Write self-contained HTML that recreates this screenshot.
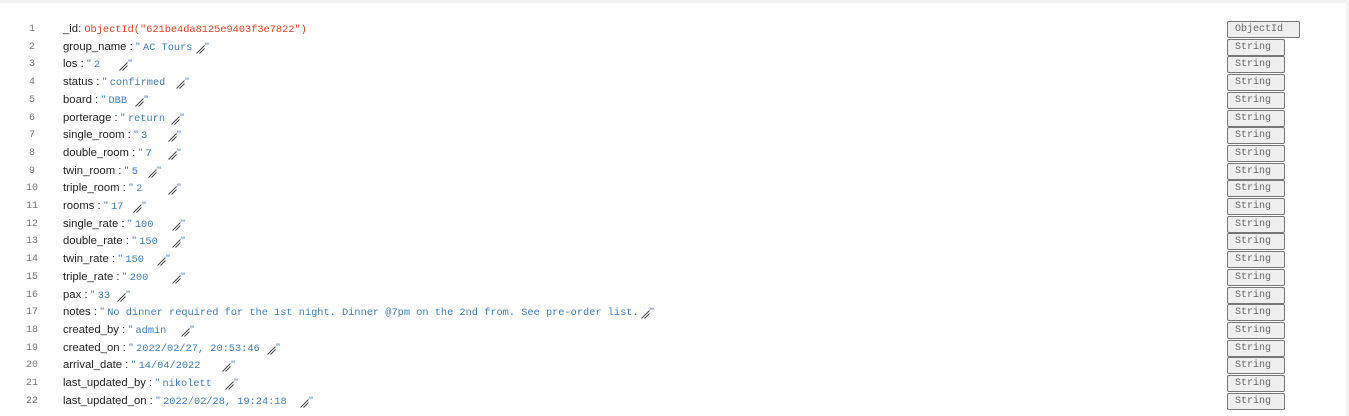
<!DOCTYPE html>
<html><head><meta charset="utf-8"><style>
body{margin:0;width:1349px;height:416px;background:#fff;position:relative;overflow:hidden;font-family:"Liberation Sans",sans-serif}
.top{position:absolute;left:0;top:0;width:1349px;height:3px;background:#f3f3f3}
.rb{position:absolute;right:0;top:0;width:3px;height:416px;background:#f3f3f3}
.r{position:absolute;left:0;height:17px;width:1349px;font-size:11.3px;line-height:17px;color:#222}
.n{position:absolute;left:22px;width:20px;text-align:center;color:#777;font-family:"Liberation Mono",monospace;font-size:10px}
.k{position:absolute;left:63px;white-space:pre}
.v{font-family:"Liberation Mono",monospace;font-size:10.3px;color:#3d7ec0}
.o{font-family:"Liberation Mono",monospace;font-size:10.3px;color:#e2401e}
.q{color:#3d7ec0}
.h{position:absolute;top:4px;width:9px;height:10px}
.cq{position:absolute;top:0;color:#3d7ec0}
.b{position:absolute;left:1227px;top:0;width:58px;border:1px solid #777;border-radius:2px;background:#efefef;color:#666;font-family:"Liberation Mono",monospace;font-size:10px;line-height:15px;padding-left:7px;box-sizing:border-box;height:17px}
</style></head><body>
<div class="top"></div><div class="rb"></div>
<div class="r" style="top:21px"><span class="n">1</span><span class="k">_id: <span class="o">ObjectId("621be4da8125e9403f3e7822")</span></span><span class="b" style="width:73px">ObjectId</span></div>
<script>
var rows=[["group_name","AC Tours",196],["los","2",119],["status","confirmed",176],["board","DBB",135],["porterage","return",171],["single_room","3",168],["double_room","7",168],["twin_room","5",148],["triple_room","2",168],["rooms","17",133],["single_rate","100",172],["double_rate","150",172],["twin_rate","150",157],["triple_rate","200",172],["pax","33",117],["notes","No dinner required for the 1st night. Dinner @7pm on the 2nd from. See pre-order list.",641],["created_by","admin",181],["created_on","2022/02/27, 20:53:46",267],["arrival_date","14/04/2022",222],["last_updated_by","nikolett",225],["last_updated_on","2022/02/28, 19:24:18",300]];
var svg='<svg viewBox="0 0 9 10" width="9" height="10"><path d="M0.5 9.5L8.5 1.5M3.5 9.5L8.5 4.5" stroke="#444" stroke-width="1" fill="none"/></svg>';
var h='';
rows.forEach(function(r,i){var t=21+(i+1)*17.7;
h+='<div class="r" style="top:'+t+'px"><span class="n">'+(i+2)+'</span><span class="k">'+r[0]+' : <span class="q">"</span> <span class="v">'+r[1]+'</span></span><span class="h" style="left:'+r[2]+'px">'+svg+'</span><span class="cq" style="left:'+(r[2]+9)+'px">"</span><span class="b">String</span></div>';});
document.write(h);
</script>
</body></html>
